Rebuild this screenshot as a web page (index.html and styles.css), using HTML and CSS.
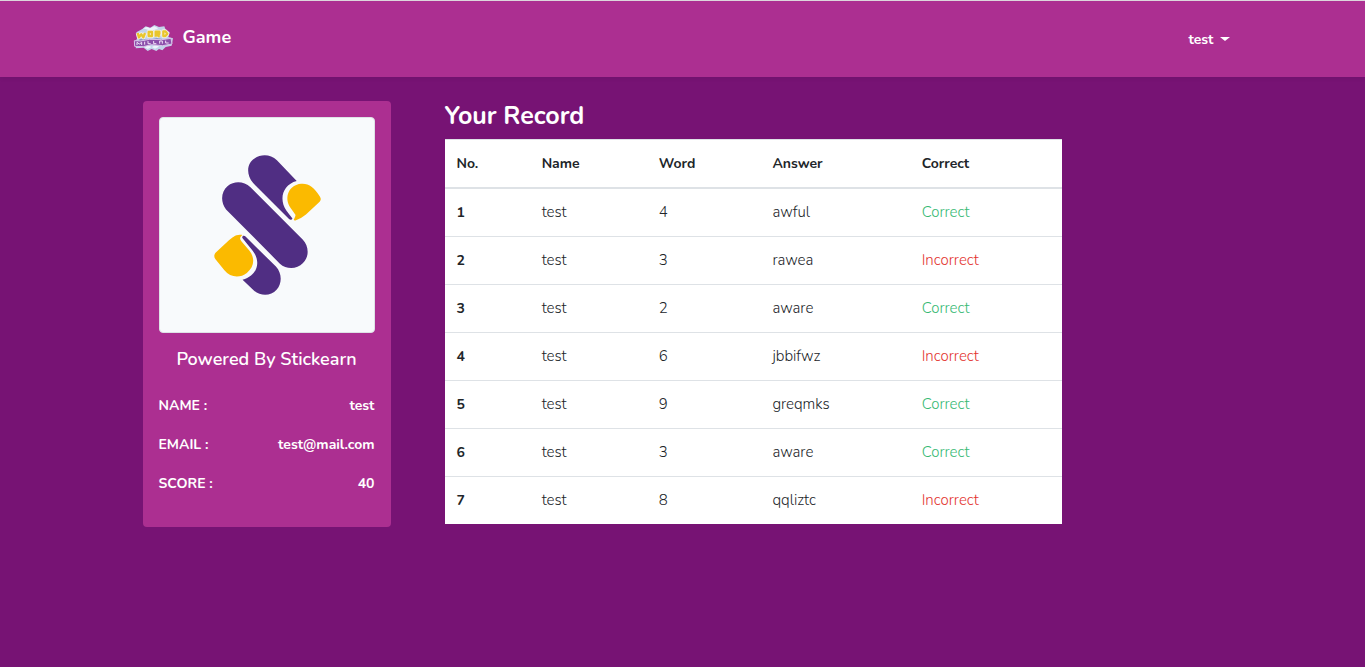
FILE: index.html
```html
<!DOCTYPE html>
<html lang="en">
<head>
<meta charset="utf-8">
<meta name="viewport" content="width=device-width, initial-scale=1">
<title>Game</title>
<link rel="stylesheet" href="styles.css">
</head>
<body>
<header class="navbar">
  <div class="container navbar-inner">
    <a class="brand" href="#">
      <svg class="brand-logo" viewBox="0 0 120 84" aria-hidden="true">
        <path fill="#c3d3ea" d="M10 28l18-10 10-8 14 4 12-8 14 6 16-2 4 10 12 8-4 14 14 4-4 22-18 4-10 10-10-4-8 6-14-6-12 6-12-10-24 2 2-12-6-8 8-8z"/>
        <path fill="#eef3fb" d="M30 16l12-4 8 4 14-6 12 6-20 8zM30 70l14-3 12 5 14-6 8 5-12 6-10-5-12 6z"/>
        <path fill="#8c9cc8" d="M18 46l28 4 26-5 30 5-2 8-84 2z"/>
        <g fill="none" stroke="#f4f1e4" stroke-width="12" stroke-linejoin="round">
          <path d="M14 30l4 13 7-9 6 9 5-13M47 27h10v12H47zM68 41V26h11v7H68l12 8M91 25h6l6 7-6 7h-6z"/>
        </g>
        <g fill="none" stroke="#e9c62c" stroke-width="7" stroke-linejoin="round">
          <path d="M14 30l4 13 7-9 6 9 5-13M47 27h10v12H47zM68 41V26h11v7H68l12 8M91 25h6l6 7-6 7h-6z"/>
        </g>
        <path fill="#8c4fab" stroke="#d9c3ea" stroke-width="3" d="M4 53l18 1 28-5 36 1 28-4 3 17-28 5-34-3-24 6-26-1z"/>
        <path fill="none" stroke="#efe2f7" stroke-width="3" d="M12 66V58l7 5 7-5v8M35 56v9M45 54v8h8M62 54v8h8M80 62v-8h8v8M98 53v7h9"/>
      </svg>
      <span>Game</span>
    </a>
    <button class="user-menu" type="button" aria-haspopup="true">test<span class="caret"></span></button>
  </div>
</header>
<main class="container content">
  <section class="card">
    <svg class="card-image" viewBox="57 66 648 648" role="img" aria-label="Stickearn">
      <g fill="#502e83">
        <path d="M339 263C316 235 321 203 343 189C364 174 392 176 411 194L471 257C428 268 416 313 440 347L458 370C455 376 451 375 447 371Z"/>
        <path d="M257 343C239 320 242 289 262 272C282 256 311 257 331 276L489 434C509 455 509 487 490 505C471 525 440 525 420 507Z"/>
        <path d="M307 430C303 424 311 419 316 425L408 516C428 538 426 569 410 586C393 605 363 606 342 589L307 556C351 544 365 502 337 467Z"/>
      </g>
      <g fill="#fbba00">
        <path d="M467 376C456 377 469 366 467 359L452 338C431 306 448 268 484 265C507 263 524 275 541 304C546 312 544 317 538 322L499 358Q485 370 467 376Z"/>
        <path d="M307 420C287 416 277 427 265 437L226 473C220 479 220 488 225 494L252 527C270 550 300 551 320 535C343 517 345 490 328 468L304 440C297 431 299 426 307 420Z"/>
      </g>
    </svg>
    <h1 class="card-title">Powered By Stickearn</h1>
    <dl class="details">
      <div class="detail"><dt>NAME :</dt><dd>test</dd></div>
      <div class="detail"><dt>EMAIL :</dt><dd>test@mail.com</dd></div>
      <div class="detail"><dt>SCORE :</dt><dd>40</dd></div>
    </dl>
  </section>
  <section class="record">
    <h2 class="record-title" id="record-title">Your Record</h2>
    <table class="table" aria-labelledby="record-title">
      <colgroup><col class="col-no"><col class="col-name"><col class="col-word"><col class="col-answer"><col></colgroup>
      <thead><tr><th scope="col">No.</th><th scope="col">Name</th><th scope="col">Word</th><th scope="col">Answer</th><th scope="col">Correct</th></tr></thead>
      <tbody>
        <tr><th scope="row">1</th><td>test</td><td>4</td><td>awful</td><td class="correct">Correct</td></tr>
        <tr><th scope="row">2</th><td>test</td><td>3</td><td>rawea</td><td class="incorrect">Incorrect</td></tr>
        <tr><th scope="row">3</th><td>test</td><td>2</td><td>aware</td><td class="correct">Correct</td></tr>
        <tr><th scope="row">4</th><td>test</td><td>6</td><td>jbbifwz</td><td class="incorrect">Incorrect</td></tr>
        <tr><th scope="row">5</th><td>test</td><td>9</td><td>greqmks</td><td class="correct">Correct</td></tr>
        <tr><th scope="row">6</th><td>test</td><td>3</td><td>aware</td><td class="correct">Correct</td></tr>
        <tr><th scope="row">7</th><td>test</td><td>8</td><td>qqliztc</td><td class="incorrect">Incorrect</td></tr>
      </tbody>
    </table>
  </section>
</main>
</body>
</html>
```
FILE: styles.css
```css
* { box-sizing: border-box; }

body {
  margin: 0;
  min-height: 100vh;
  background: #771374;
  color: #212529;
  font-family: Nunito, Lato, "Open Sans", sans-serif;
  font-size: 15px;
  line-height: 23px;
}

.container {
  width: 100%;
  max-width: 1140px;
  margin: 0 auto;
}

.navbar {
  background: #ac2f91;
  border-top: 1px solid #dcd6dc;
  box-shadow: 0 2px 4px rgba(0, 0, 0, 0.05);
}

.navbar-inner {
  display: flex;
  align-items: center;
  justify-content: space-between;
  padding: 16px 23px 20px 20px;
}

.brand {
  display: flex;
  align-items: center;
  gap: 10px;
  color: #fff;
  font-size: 18px;
  line-height: 40px;
  font-weight: 700;
  text-decoration: none;
}

.brand-logo { width: 40px; height: 28px; }

.user-menu {
  display: flex;
  align-items: center;
  gap: 6px;
  padding: 4px 0 0;
  border: 0;
  background: none;
  color: #fff;
  font: inherit;
  font-size: 14px;
  font-weight: 700;
  cursor: pointer;
}

.caret {
  border: 5px solid transparent;
  border-top: 4px solid #fff;
  border-bottom: 0;
}

.content {
  display: flex;
  align-items: flex-start;
  gap: 54px;
  padding: 24px 30px;
}

.card {
  flex: 0 0 248px;
  padding: 16px 16px 32px;
  border-radius: 4px;
  background: #ac2f91;
  color: #fff;
}

.card-image {
  display: block;
  width: 100%;
  border: 1px solid #dee2e6;
  border-radius: 4px;
  background: #f8fafc;
}

.card-title {
  margin: 16px 0 24px;
  font-size: 18px;
  line-height: 21px;
  font-weight: 600;
  text-align: center;
}

.details {
  display: grid;
  gap: 16px;
  margin: 0;
  font-size: 14px;
  font-weight: 700;
}

.detail {
  display: flex;
  justify-content: space-between;
}

.detail dd { margin: 0; }

.record { flex: 0 1 617px; }

.record-title {
  margin: 0 0 8px;
  color: #fff;
  font-size: 25px;
  line-height: 30px;
  font-weight: 700;
}

.table {
  width: 100%;
  table-layout: fixed;
  border-spacing: 0;
  background: #fff;
}

.col-no { width: 13.8%; }
.col-name { width: 19%; }
.col-word { width: 18.4%; }
.col-answer { width: 24.2%; }

.table th,
.table td {
  padding: 12px;
  border-top: 1px solid #dee2e6;
  text-align: left;
}

.table th {
  font-size: 14px;
  font-weight: 700;
}

.table thead th { border-bottom: 2px solid #dee2e6; }
.table tbody tr:first-child > * { border-top: 0; }
.table td { font-weight: 300; }
.table .correct { color: #38b974; }
.table .incorrect { color: #e3342f; }
```
